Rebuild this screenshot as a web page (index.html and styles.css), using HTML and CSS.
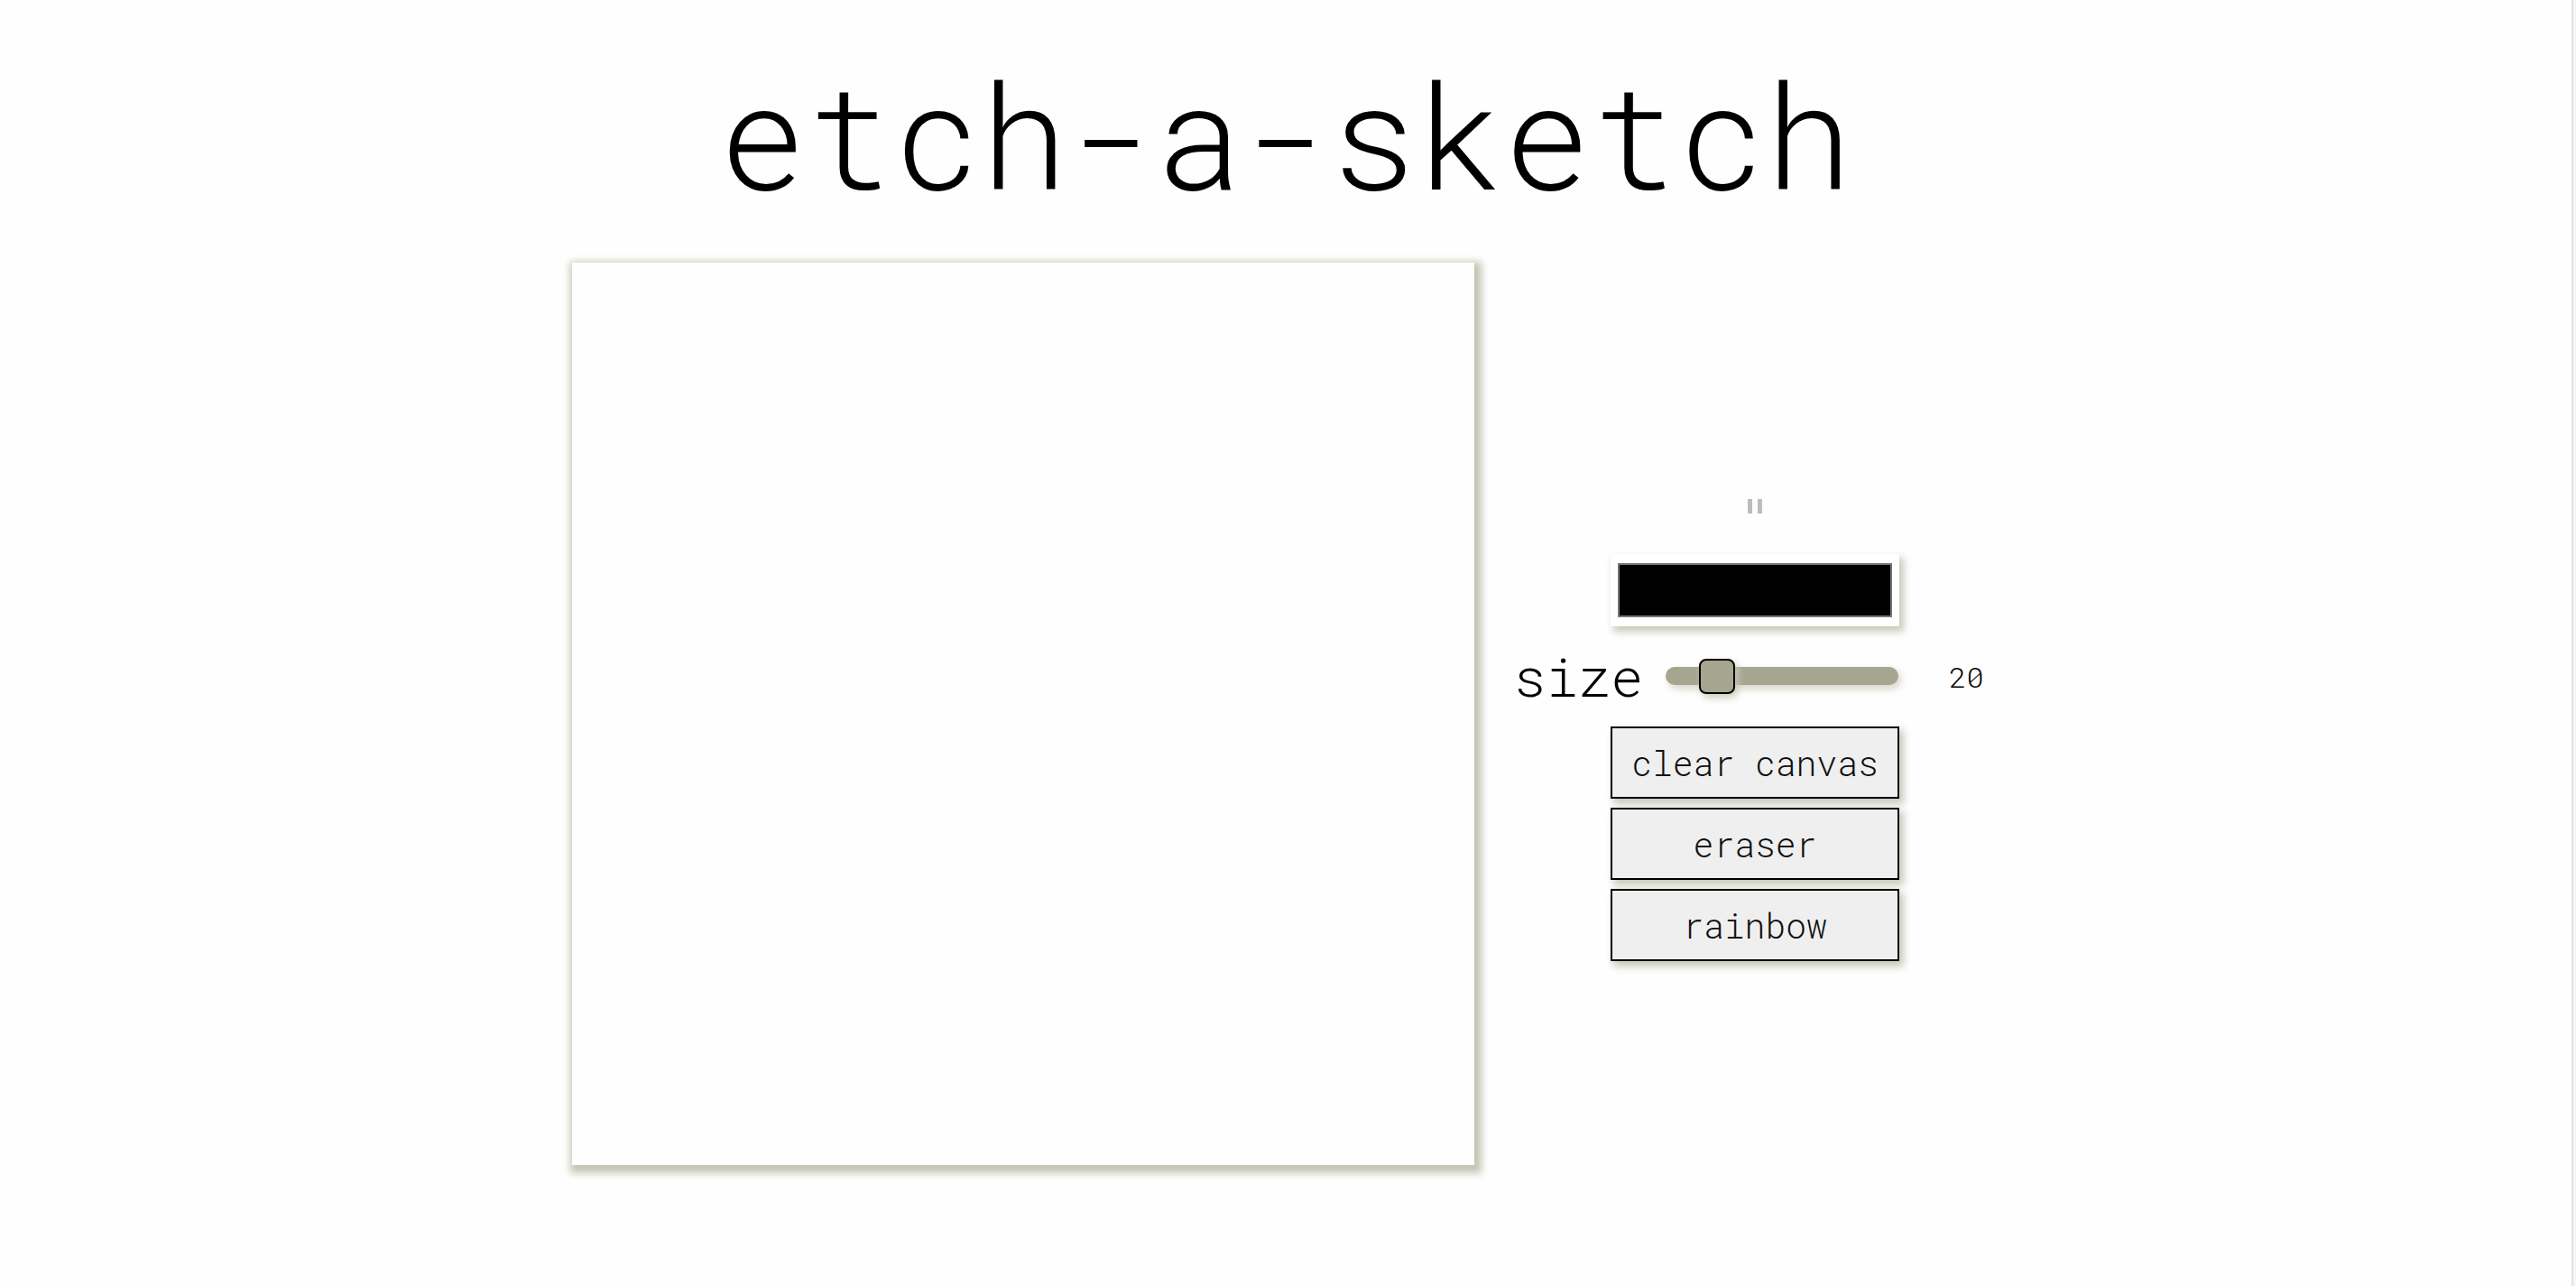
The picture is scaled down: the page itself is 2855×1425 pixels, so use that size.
FILE: index.html
```html
<!DOCTYPE html>
<html lang="en">
<head>
<meta charset="utf-8">
<title>etch-a-sketch</title>
<link rel="stylesheet" href="styles.css">
</head>
<body>
  <h1 class="title">etch-a-sketch</h1>
  <main class="board">
    <div class="canvas"></div>
    <div class="controls">
      <div class="status" aria-label="paused"><span class="bar"></span><span class="bar"></span></div>
      <input class="color-picker" type="color" value="#000000">
      <div class="size-row">
        <label class="size-label" for="size">size</label>
        <input class="slider" id="size" type="range" min="4" max="100" value="20">
        <span class="size-value">20</span>
      </div>
      <div class="buttons">
        <button class="btn">clear canvas</button>
        <button class="btn">eraser</button>
        <button class="btn">rainbow</button>
      </div>
    </div>
  </main>
</body>
</html>
```
FILE: styles.css
```css
html {
  margin: 0;
  padding: 0;
  background: #f7f7f7;
}
body {
  margin: 0 3px 0 0;
  padding: 0;
  border-right: 2px solid #e3e3e3;
  background: #fefefe;
  font-family: "Roboto Mono", "DejaVu Sans Mono", "Liberation Mono", monospace;
  font-weight: 300;
  color: #000;
  overflow: hidden;
  height: 1425px;
}
.title {
  margin: 0;
  padding: 67px 0 63px;
  font-size: 161px;
  line-height: 1;
  font-weight: 300;
  text-align: center;
}
.board {
  display: flex;
  justify-content: center;
  align-items: center;
  gap: 40px;
}
.canvas {
  width: 1000px;
  height: 1000px;
  background: #fefefe;
  box-shadow: 3px 4px 8px 5px #c4c5b4;
  flex: none;
}
.controls {
  width: 542px;
  display: flex;
  flex-direction: column;
  align-items: center;
  padding-top: 36px;
}
.status {
  display: flex;
  gap: 6px;
  height: 16px;
  margin-bottom: 45px;
}
.bar {
  width: 5px;
  height: 16px;
  background: #bdbdbd;
}
.color-picker {
  -webkit-appearance: none;
  appearance: none;
  width: 320px;
  height: 80px;
  padding: 0;
  margin: 0;
  border: none;
  background: #fff;
  box-shadow: 4px 5px 8px 1px #c9cabb;
  cursor: pointer;
}
.color-picker::-webkit-color-swatch-wrapper {
  padding: 10px 8px;
}
.color-picker::-webkit-color-swatch {
  border: 2px solid #767676;
  border-radius: 0;
}
.size-row {
  display: flex;
  align-items: center;
  height: 70px;
  margin: 20px 0 21px;
  transform: translateX(-7px);
}
.size-label {
  font-size: 60px;
  line-height: 70px;
  margin-right: 25px;
}
.slider {
  -webkit-appearance: none;
  appearance: none;
  width: 258px;
  height: 20px;
  margin: 0;
  border-radius: 10px;
  background: #a6a690;
  box-shadow: 3px 4px 8px #d3d4c6;
  outline: none;
}
.slider::-webkit-slider-thumb {
  -webkit-appearance: none;
  appearance: none;
  width: 40px;
  height: 39px;
  box-sizing: border-box;
  border: 2px solid #000;
  border-radius: 8px;
  background: #a6a690;
  box-shadow: 3px 4px 8px #c9cabb;
  cursor: pointer;
}
.size-value {
  font-size: 32px;
  margin-left: 56px;
}
.buttons {
  display: flex;
  flex-direction: column;
  gap: 10px;
}
.btn {
  width: 320px;
  height: 80px;
  margin: 0;
  padding: 0;
  border: 2px solid #000;
  border-radius: 0;
  background: #efefef;
  color: #111;
  font-family: inherit;
  font-weight: 300;
  font-size: 38px;
  box-shadow: 4px 5px 8px 1px #c9cabb;
  cursor: pointer;
}
```
